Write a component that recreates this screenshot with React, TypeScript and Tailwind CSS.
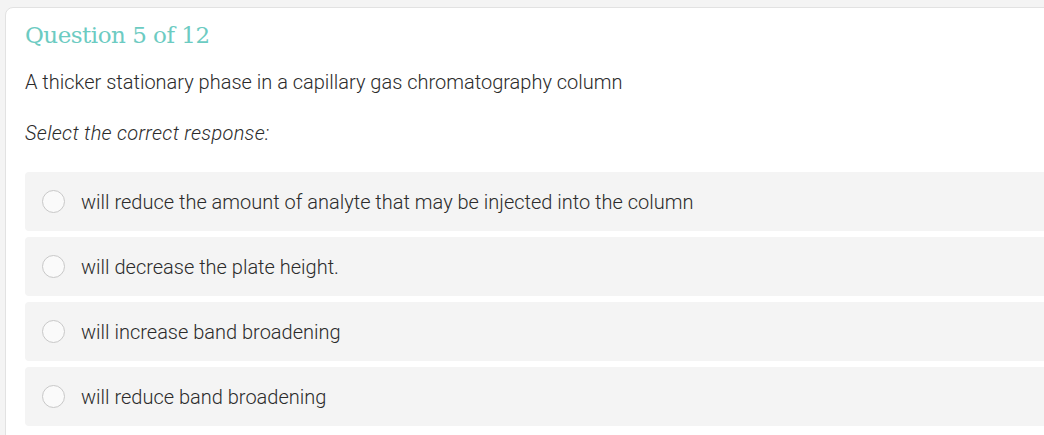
import React from 'react';

const options = [
    'will reduce the amount of analyte that may be injected into the column',
    'will decrease the plate height.',
    'will increase band broadening',
    'will reduce band broadening'
];

const App: React.FC = () => {
    return (
        <div className="w-full h-screen overflow-hidden bg-[#f4f4f4] pl-[5px] pt-[7px] font-['Roboto',sans-serif]">
            <div className="w-[1080px] min-h-[460px] bg-white border border-[#e2e2e2] rounded-tl-lg pl-[19px] pt-[10px]">
                {/* Header */}
                <h1 className="font-['DejaVu_Serif',serif] text-[23px] leading-[34px] text-[#6ccbc2] tracking-[-0.5px]">
                    Question 5 of 12
                </h1>

                <p className="mt-[15px] text-[20px] leading-[30px] font-light text-[#2b2b2b]">
                    A thicker stationary phase in a capillary gas chromatography column
                </p>

                <p className="mt-[21px] text-[20px] leading-[30px] font-light italic text-[#2b2b2b] tracking-[0.3px]">
                    Select the correct response:
                </p>

                {/* Answer choices */}
                <div className="mt-[24px] flex flex-col gap-[6px]">
                    {options.map((opt) => (
                        <label
                            key={opt}
                            className="flex items-center h-[59px] bg-[#f4f4f4] rounded-[4px] pl-[17px] cursor-pointer">
                            <span className="w-[23px] h-[23px] rounded-full border border-[#c8c8c8] bg-[#fafafa] shrink-0" />
                            <span className="ml-[16px] text-[20px] font-light text-[#2b2b2b]">{opt}</span>
                        </label>
                    ))}
                </div>
            </div>
        </div>
    );
};

export default App;
